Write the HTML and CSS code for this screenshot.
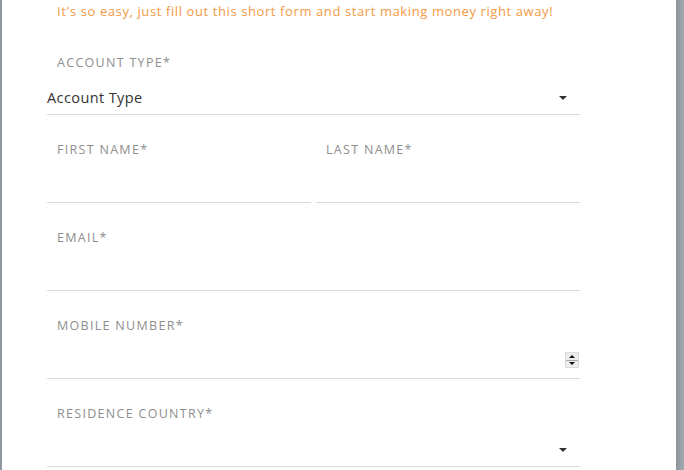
FILE: index.html
```html
<!DOCTYPE html>
<html>
<head>
<meta charset="utf-8">
<link rel="stylesheet" href="styles.css">
</head>
<body>
<div class="page">
  <form class="form">
    <p class="intro">It's so easy, just fill out this short form and start making money right away!</p>
    <div class="field first">
      <div class="label">ACCOUNT TYPE*</div>
      <div class="control select">
        <span class="value">Account Type</span>
        <span class="caret"></span>
      </div>
    </div>
    <div class="row">
      <div class="field">
        <div class="label">FIRST NAME*</div>
        <div class="control"></div>
      </div>
      <div class="field">
        <div class="label">LAST NAME*</div>
        <div class="control"></div>
      </div>
    </div>
    <div class="field">
      <div class="label">EMAIL*</div>
      <div class="control"></div>
    </div>
    <div class="field">
      <div class="label">MOBILE NUMBER*</div>
      <div class="control number">
        <span class="spinner">
          <span class="spin up"></span>
          <span class="spin down"></span>
        </span>
      </div>
    </div>
    <div class="field">
      <div class="label">RESIDENCE COUNTRY*</div>
      <div class="control select">
        <span class="value"></span>
        <span class="caret"></span>
      </div>
    </div>
  </form>
</div>
</body>
</html>
```
FILE: styles.css
```css
html, body {
  margin: 0;
  padding: 0;
  height: 100%;
  overflow: hidden;
}
body {
  background: linear-gradient(90deg, #8f989f 0, #8f989f 2px, #ffffff 2px, #ffffff 676px, #8c959c 676px, #a3abb1 684px);
  font-family: "Open Sans", "Liberation Sans", sans-serif;
}
.page {
  margin-left: 2px;
  width: 674px;
  height: 100%;
  background: #ffffff;
}
.form {
  margin: 0 0 0 45px;
  width: 533px;
}
.intro {
  margin: 0;
  padding-left: 10px;
  height: 22px;
  line-height: 22px;
  font-size: 13px;
  color: #f29a45;
  letter-spacing: 0.6px;
  white-space: nowrap;
}
.field {
  padding-top: 27px;
}
.field.first {
  padding-top: 33px;
}
.label {
  padding-left: 10px;
  height: 16px;
  line-height: 16px;
  font-size: 12.5px;
  color: #8e8e8e;
  letter-spacing: 1.3px;
  white-space: nowrap;
}
.control {
  border-bottom: 1px solid #d8d8d8;
  display: flex;
  align-items: flex-end;
  justify-content: space-between;
  box-sizing: border-box;
  height: 45px;
}
.field.first .control {
  height: 44px;
}
.select {
  padding: 0 13px 6px 0;
}
.value {
  font-size: 14.5px;
  line-height: 20px;
  color: #333333;
  height: 20px;
  letter-spacing: 0.4px;
}
.caret {
  width: 0;
  height: 0;
  border-left: 4px solid transparent;
  border-right: 4px solid transparent;
  border-top: 4px solid #333333;
  margin-bottom: 8px;
}
.row {
  display: flex;
  gap: 5px;
}
.row .field {
  flex: 1;
}
.number {
  justify-content: flex-end;
  padding: 0 1px 10px 0;
}
.spinner {
  display: flex;
  flex-direction: column;
  width: 14px;
  height: 16px;
  background: #ececec;
  border: 1px solid #dcdcdc;
  box-sizing: border-box;
}
.spin {
  flex: 1;
  display: flex;
  align-items: center;
  justify-content: center;
}
.spin.up {
  border-bottom: 1px solid #a8a8a8;
}
.spin.up::before {
  content: "";
  border-left: 3px solid transparent;
  border-right: 3px solid transparent;
  border-bottom: 3px solid #111111;
}
.spin.down::before {
  content: "";
  border-left: 3px solid transparent;
  border-right: 3px solid transparent;
  border-top: 3px solid #111111;
}
```
